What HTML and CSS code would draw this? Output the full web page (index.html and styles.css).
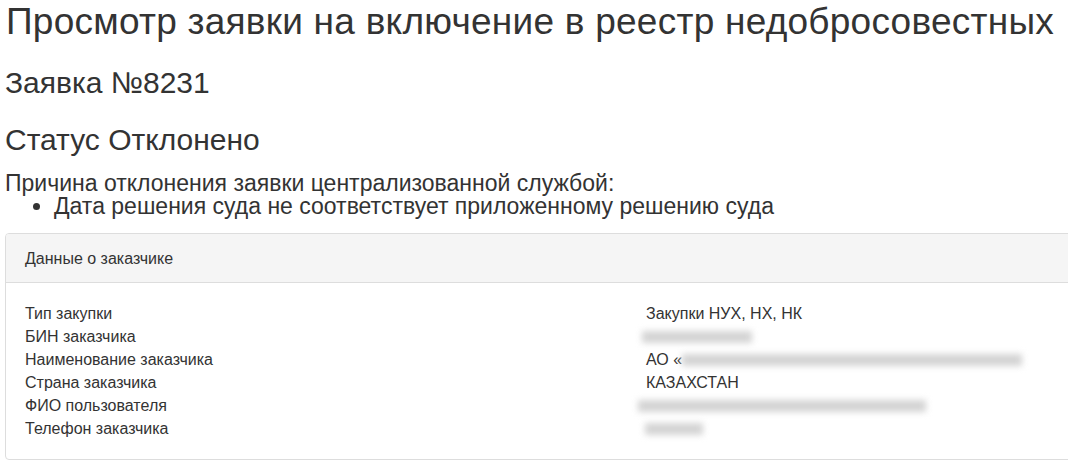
FILE: index.html
```html
<!doctype html>
<html>
<head>
<meta charset="utf-8" />
<title>Просмотр заявки</title>
<link rel="stylesheet" href="styles.css">
</head>
<body>
<div class="page">
<h1>Просмотр заявки на включение в реестр недобросовестных</h1>
<h3>Заявка №8231</h3>
<h3 class="status">Статус Отклонено</h3>
<div class="reason">
Причина отклонения заявки централизованной службой:
<ul>
<li>Дата решения суда не соответствует приложенному решению суда</li>
</ul>
</div>
<div class="panel">
<div class="panel-heading">Данные о заказчике</div>
<div class="panel-body">
<div class="row"><span class="label">Тип закупки</span><span class="value">Закупки НУХ, НХ, НК</span></div>
<div class="row"><span class="label">БИН заказчика</span><span class="value"><span class="hidden w-bin"></span></span></div>
<div class="row"><span class="label">Наименование заказчика</span><span class="value">АО «<span class="hidden w-name"></span></span></div>
<div class="row"><span class="label">Страна заказчика</span><span class="value">КАЗАХСТАН</span></div>
<div class="row"><span class="label">ФИО пользователя</span><span class="value"><span class="hidden w-fio"></span></span></div>
<div class="row"><span class="label">Телефон заказчика</span><span class="value"><span class="hidden w-phone"></span></span></div>
</div>
</div>
</div>
</body>
</html>
```
FILE: styles.css
```css
html, body { margin: 0; padding: 0; overflow: hidden; }
body { font-family: "Liberation Sans", Arial, sans-serif; color: #333; background: #fff; }
.page { padding: 2px 0 0 5px; }
h1 { font-size: 37px; letter-spacing: 0.25px; font-weight: normal; line-height: 1.1; margin: 0 0 23px 1px; }
h3 { font-size: 30px; font-weight: normal; line-height: 1.1; margin: 0 0 24px 0; }
h3.status { margin-bottom: 16px; }
.reason { font-size: 23px; line-height: 23px; }
.reason ul { margin: 0; padding-left: 49px; }
.panel { width: 1300px; margin-top: 15px; border: 1px solid #ddd; border-radius: 4px; font-size: 16px; }
.panel-heading { background: #f5f5f5; border-bottom: 1px solid #ddd; padding: 13px 19px 12px; line-height: 23px; border-radius: 3px 3px 0 0; }
.panel-body { padding: 19px 19px; }
.row { display: grid; grid-template-columns: 621px 1fr; line-height: 23px; }
.hidden { display: inline-block; height: 12px; vertical-align: middle; background: #d4d4d4; filter: blur(3px); }
.w-bin { width: 110px; margin-left: -4px; }
.w-name { width: 340px; }
.w-fio { width: 288px; margin-left: -8px; }
.w-phone { width: 58px; margin-left: -1px; }
```
